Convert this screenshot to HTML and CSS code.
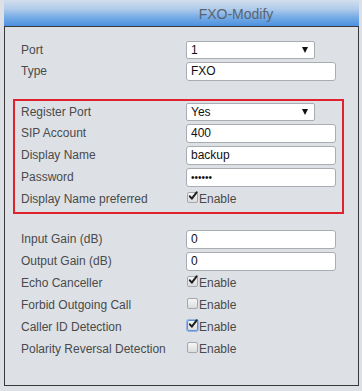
FILE: index.html
```html
<!DOCTYPE html>
<html lang="en">
<head>
    <meta charset="UTF-8">
    <meta name="viewport" content="width=device-width, initial-scale=1.0">
    <title>FXO-Modify</title>
    <link rel="stylesheet" href="styles.css">
</head>
<body>
    <div class="frame">
        <div class="title">FXO-Modify</div>
        <form class="panel">
            <div class="group group-top">
                <div class="row row-select">
                    <label class="label" for="port">Port</label>
                    <span class="select-wrap">
                        <select id="port" name="port"><option>1</option></select>
                    </span>
                </div>
                <div class="row">
                    <label class="label" for="type">Type</label>
                    <input type="text" id="type" name="type" value="FXO">
                </div>
            </div>

            <div class="group group-marked">
                <div class="row row-select">
                    <label class="label" for="register_port">Register Port</label>
                    <span class="select-wrap">
                        <select id="register_port" name="register_port"><option>Yes</option><option>No</option></select>
                    </span>
                </div>
                <div class="row">
                    <label class="label" for="sip_account">SIP Account</label>
                    <input type="text" id="sip_account" name="sip_account" value="400">
                </div>
                <div class="row">
                    <label class="label" for="display_name">Display Name</label>
                    <input type="text" id="display_name" name="display_name" value="backup">
                </div>
                <div class="row">
                    <label class="label" for="password">Password</label>
                    <input type="password" id="password" name="password" value="123456">
                </div>
                <div class="row">
                    <span class="label">Display Name preferred</span>
                    <label class="check"><span class="box checked"><svg viewBox="0 0 12 12"><path d="M2.2 6.4 L4.6 9.2 L10.4 1.6" /></svg></span>Enable</label>
                </div>
            </div>

            <div class="group group-gain">
                <div class="row">
                    <label class="label" for="input_gain">Input Gain (dB)</label>
                    <input type="text" id="input_gain" name="input_gain" value="0">
                </div>
                <div class="row">
                    <label class="label" for="output_gain">Output Gain (dB)</label>
                    <input type="text" id="output_gain" name="output_gain" value="0">
                </div>
                <div class="row">
                    <span class="label">Echo Canceller</span>
                    <label class="check"><span class="box checked"><svg viewBox="0 0 12 12"><path d="M2.2 6.4 L4.6 9.2 L10.4 1.6" /></svg></span>Enable</label>
                </div>
                <div class="row">
                    <span class="label">Forbid Outgoing Call</span>
                    <label class="check"><span class="box"></span>Enable</label>
                </div>
                <div class="row">
                    <span class="label">Caller ID Detection</span>
                    <label class="check"><span class="box checked focused"><svg viewBox="0 0 12 12"><path d="M2.2 6.4 L4.6 9.2 L10.4 1.6" /></svg></span>Enable</label>
                </div>
                <div class="row">
                    <span class="label">Polarity Reversal Detection</span>
                    <label class="check"><span class="box"></span>Enable</label>
                </div>
            </div>
        </form>
    </div>
</body>
</html>
```

FILE: styles.css
```css
:root {
    --page-bg: #dde1e6;
    --label-color: #4a4a4a;
    --frame-border: #3a3a3a;
    --field-border: #a9adb2;
    --mark-red: #e0222c;
}

body {
    margin: 0;
    background-color: var(--page-bg);
    font-family: 'Liberation Sans', Arial, sans-serif;
    font-size: 12px;
    color: var(--label-color);
}

.frame {
    margin-left: 4px;
    width: 355px;
}

.title {
    height: 26px;
    line-height: 28px;
    padding-left: 109px;
    text-align: center;
    font-size: 14px;
    color: #5a6470;
    background: linear-gradient(to bottom, #d2dfec 0%, #b0cbea 35%, #78ade6 65%, #4b90e0 100%);
}

.panel {
    margin: 0;
    border: 1px solid var(--frame-border);
    padding: 10px 0 22px;
}

.group {
    width: 315px;
    margin-left: 8px;
    border: 2px solid transparent;
    padding: 1px 6px;
}

.group-marked {
    margin-top: 14px;
    border-color: var(--mark-red);
    padding-bottom: 2px;
}

.group-gain {
    margin-top: 11px;
}

.row {
    display: flex;
    align-items: center;
    height: 22px;
}

.row-select {
    height: 20px;
}

.label {
    width: 165px;
    flex-shrink: 0;
}

input[type="text"],
input[type="password"] {
    box-sizing: border-box;
    width: 150px;
    height: 19px;
    margin: 0;
    padding: 0 4px;
    border: 1px solid var(--field-border);
    border-radius: 3px;
    background: #fff;
    font-family: inherit;
    font-size: 12px;
    color: #111;
    outline: none;
}

input[type="password"] {
    font-size: 10px;
}

.select-wrap {
    position: relative;
    display: block;
}

.select-wrap select {
    appearance: none;
    -webkit-appearance: none;
    box-sizing: border-box;
    display: block;
    width: 129px;
    height: 18px;
    margin: 0;
    padding: 0 0 0 4px;
    border: 1px solid var(--field-border);
    border-radius: 2px;
    background: #fff;
    font-family: inherit;
    font-size: 12px;
    color: #111;
    outline: none;
}

/* arrow drawn over the select */
.select-wrap::after {
    content: "";
    position: absolute;
    right: 7px;
    top: 6px;
    border-left: 3.5px solid transparent;
    border-right: 3.5px solid transparent;
    border-top: 6px solid #111;
    pointer-events: none;
}

.check {
    display: flex;
    align-items: center;
    color: var(--label-color);
}

.box {
    box-sizing: border-box;
    position: relative;
    width: 11px;
    height: 11px;
    margin: -3px 1px 0 1px;
    border: 1px solid #a4a8ad;
    border-radius: 2px;
    background: linear-gradient(to bottom, #f6f6f6, #dcdcdc);
}

.box svg {
    position: absolute;
    left: 0;
    top: -2px;
    width: 10px;
    height: 10px;
}

.box svg path {
    fill: none;
    stroke: #1e1e1e;
    stroke-width: 2.4;
    stroke-linecap: round;
    stroke-linejoin: round;
}

.box.focused {
    border-color: #5b8fd8;
    box-shadow: 0 0 0 1px rgba(91, 143, 216, 0.55);
}
```
